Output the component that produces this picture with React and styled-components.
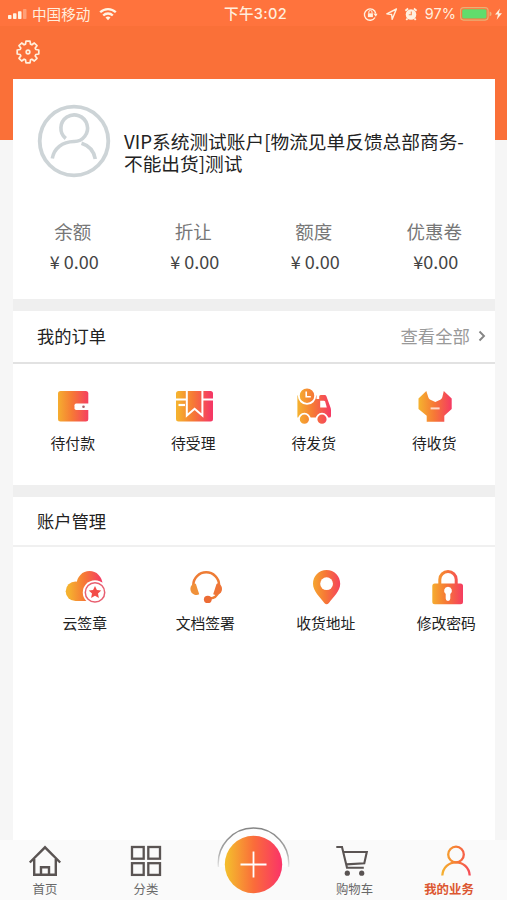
import React from 'react';
import styled, { createGlobalStyle } from 'styled-components';

const Warm = ({ id }) => (
  <defs>
    <linearGradient id={id} gradientUnits="userSpaceOnUse" x1="4" y1="0" x2="37" y2="0">
      <stop offset="0" stopColor="#f5b12f" />
      <stop offset="0.45" stopColor="#f67a35" />
      <stop offset="1" stopColor="#f53964" />
    </linearGradient>
  </defs>
);

const WalletIcon = () => (
  <Icon viewBox="0 0 40 40">
    <Warm id="wallet" />
    <rect x="5" y="4" width="30.3" height="30.5" rx="2.5" fill="url(#wallet)" />
    <path d="M37 16.5H23.2a1.7 1.7 0 0 0-1.700 1.700v3.100a1.700 1.700 0 0 0 1.700 1.700H37z" fill="#fff" />
    <circle cx="30.5" cy="19.7" r="1.3" fill="#a8606a" />
  </Icon>
);

const BoxIcon = () => (
  <Icon viewBox="0 0 40 40">
    <Warm id="box" />
    <rect x="2" y="4" width="37" height="30.5" rx="2.5" fill="url(#box)" />
    <path d="M1 12.5h39" stroke="#fff" strokeWidth="2" />
    <path d="M12.8 3v25.5l7.8-6.7 7.8 6.7V3z" fill="url(#box)" stroke="#fff" strokeWidth="2" />
    <path d="M11 2h19v2H11z" fill="#fff" />
    <path d="M4.500 18h6.500" stroke="#fff" strokeWidth="2.200" />
  </Icon>
);

const TruckIcon = () => (
  <Icon viewBox="0 0 40 40">
    <Warm id="truck" />
    <path d="M3.400 8.500H22.500v3.500h2.700V9.500q0-1.500 1.500-1.500h4q1.200 0 1.700 1.200l4 11q.6 1.300.6 3v5.800q0 1.500-1.600 1.500H3.400z" fill="url(#truck)" />
    <path d="M26.200 13.800h3.700q1 0 1.300 1l1.600 5.700h-6.600z" fill="#fff" />
    <circle cx="13" cy="8.700" r="8.200" fill="url(#truck)" stroke="#fff" strokeWidth="1.900" />
    <path d="M12.200 4.500v5.200h4.600" fill="none" stroke="#fff" strokeWidth="1.600" />
    <circle cx="10.400" cy="32.200" r="5.500" fill="url(#truck)" stroke="#fff" strokeWidth="1.800" />
    <circle cx="28" cy="32.200" r="5.500" fill="url(#truck)" stroke="#fff" strokeWidth="1.800" />
  </Icon>
);

const ReceiveIcon = () => (
  <Icon viewBox="0 0 40 40">
    <Warm id="receive" />
    <path
      d="M3.500 11.500 11.300 4l2 6.200q.4 1.400 1.600 2.200l5.400 2.600 5.400-2.600q1.200-.8 1.600-2.200l1.500-6.200 7.900 7.500v10.500L29.300 28.700v6H11.700v-6L3.500 22z"
      fill="url(#receive)"
    />
    <path d="M15.600 21.400h9" stroke="#ffd9c9" strokeWidth="2" />
  </Icon>
);

const CloudIcon = () => (
  <Icon viewBox="0 0 40 40">
    <Warm id="cloud" />
    <g fill="url(#cloud)">
      <circle cx="10.500" cy="24.200" r="9.800" />
      <circle cx="24.500" cy="17" r="12.900" />
      <path d="M10.500 20H30v14H10.500z" />
    </g>
    <circle cx="30" cy="25.400" r="12.200" fill="#fff" />
    <circle cx="30" cy="25.400" r="9.700" fill="#fff" stroke="#e85f70" strokeWidth="1.500" />
    <path
      d="m30 19 1.900 4.100 4.400.5-3.300 3 .9 4.400-3.900-2.200-3.900 2.200.9-4.400-3.300-3 4.400-.5z"
      fill="#f24d48"
    />
  </Icon>
);

const HeadsetIcon = () => (
  <Icon viewBox="0 0 40 40">
    <g fill="none" stroke="#ee7c35" strokeWidth="2.500" strokeLinecap="round">
      <path d="M7.300 19v-1a12.900 12.700 0 0 1 25.800 0v1" />
      <path d="M32.400 25q-1.800 6-8.400 6.500" />
    </g>
    <path d="M8.600 16.300Q4.400 18 4.400 22t4.200 5.700q2.600.7 4.600-.4L9.900 17z" fill="#f0913a" />
    <path d="M31.800 16.300q4.200 1.700 4.200 5.700t-4.200 5.700q-2.600.7-4.600-.4L30.500 17z" fill="#ee7437" />
    <ellipse cx="21.800" cy="32.400" rx="3.900" ry="3.600" fill="#ec6c35" />
  </Icon>
);

const PinIcon = () => (
  <Icon viewBox="0 0 40 40">
    <Warm id="pin" />
    <path
      d="M20.600 3C13 3 7 9 7 16.700c0 7.600 7 13.200 11.300 19.400q2.300 2.400 4.600 0C27.200 29.900 34.200 24.300 34.200 16.700 34.200 9 28.200 3 20.600 3z"
      fill="url(#pin)"
    />
    <circle cx="20.600" cy="16.700" r="6.400" fill="#fff" />
  </Icon>
);

const LockIcon = () => (
  <Icon viewBox="0 0 40 40">
    <Warm id="lock" />
    <path d="M12.800 18v-5.500a8.200 8 0 0 1 16.400 0V18" fill="none" stroke="url(#lock)" strokeWidth="3" />
    <rect x="5.300" y="16.500" width="30.700" height="20.800" rx="2.500" fill="url(#lock)" />
    <path d="M21 19.800a4 4 0 0 0-2.300 7.200v4.600a2.300 2.300 0 0 0 4.600 0V27a4 4 0 0 0-2.300-7.200z" fill="#fff" />
  </Icon>
);

const HomeIcon = () => (
  <TabIcon viewBox="0 0 36 36" fill="none" stroke="#5a5453" strokeWidth="2.400">
    <path d="M2.800 20.500 18 5.300 33.200 20.500" />
    <path d="M7.200 17v15.800h21.600V17" />
    <path d="M14 32.500v-7.200h8v7.200" />
  </TabIcon>
);

const CategoryIcon = () => (
  <TabIcon viewBox="0 0 36 36" fill="none" stroke="#5a5453" strokeWidth="2.300">
    <rect x="4" y="5" width="11.700" height="11.700" />
    <rect x="20.300" y="5" width="11.700" height="11.700" />
    <rect x="4" y="21.200" width="11.700" height="11.700" />
    <rect x="20.300" y="21.200" width="11.700" height="11.700" />
  </TabIcon>
);

const CartIcon = () => (
  <TabIcon viewBox="0 0 36 36" shift={-2.5} fill="none" stroke="#5a5453" strokeWidth="2.100">
    <path d="M2.300 5H8l5 20.700h16.800" />
    <path d="M9.500 10h23.300l-2.500 11.200-18 1.200" />
    <circle cx="13.300" cy="31.200" r="2.600" fill="#5a5453" stroke="none" />
    <circle cx="27.700" cy="31.200" r="2.600" fill="#5a5453" stroke="none" />
  </TabIcon>
);

const MineIcon = () => (
  <TabIcon viewBox="0 0 36 36" shift={6.5} fill="none" stroke="url(#mine)" strokeWidth="2.300">
    <Warm id="mine" />
    <circle cx="18" cy="12.500" r="7.800" />
    <path d="M4.300 33.500C4.800 25.500 11 20.300 18 20.300S31.200 25.500 31.700 33.500" />
  </TabIcon>
);

const AddIcon = () => (
  <AddDrawing viewBox="0 0 76 76">
    <defs>
      <linearGradient id="add" gradientUnits="userSpaceOnUse" x1="11" y1="0" x2="65" y2="0">
        <stop offset="0" stopColor="#f4bb2d" />
        <stop offset="0.5" stopColor="#fa6c3a" />
        <stop offset="1" stopColor="#fa3567" />
      </linearGradient>
      <linearGradient id="ring" x1="0" y1="0" x2="0" y2="1">
        <stop offset="0" stopColor="#858585" />
        <stop offset="0.6" stopColor="#a5a5a5" />
        <stop offset="1" stopColor="#e8e8e8" />
      </linearGradient>
    </defs>
    <path d="M2.500 43A35.200 35.200 0 1 1 72.500 43" fill="#fdfdfd" stroke="url(#ring)" strokeWidth="1.500" />
    <circle cx="37.500" cy="40.500" r="28.700" fill="url(#add)" />
    <path d="M37.500 27.500v26M24.500 40.500h26" stroke="#fff" strokeWidth="1.800" />
  </AddDrawing>
);

const GearIcon = () => (
  <svg width="26" height="26" viewBox="0 0 26 26" fill="none" stroke="#fff0dc" strokeWidth="1.700" strokeLinejoin="round">
    <path d="M10.500 5.200 11 2.200 15 2.200 15.500 5.200 16.900 5.800 19.300 4 22 6.700 20.200 9.100 20.800 10.500 23.800 11 23.800 15 20.800 15.500 20.200 16.900 22 19.300 19.300 22 16.900 20.200 15.500 20.800 15 23.800 11 23.800 10.500 20.800 9.100 20.200 6.700 22 4 19.300 5.800 16.900 5.200 15.500 2.200 15 2.200 11 5.200 10.500 5.800 9.100 4 6.700 6.700 4 9.100 5.800z" />
    <circle cx="13" cy="13" r="1.800" />
  </svg>
);

const SignalIcon = () => (
  <svg width="20" height="12" viewBox="0 0 20 12" fill="#fff4e4">
    <rect x="0" y="7" width="3.500" height="4" rx="0.800" />
    <rect x="5" y="5.300" width="3.500" height="5.700" rx="0.800" />
    <rect x="10" y="3.300" width="3.500" height="7.700" rx="0.800" />
    <rect x="15" y="1" width="3.500" height="10" rx="0.800" opacity="0.350" />
  </svg>
);

const WifiIcon = () => (
  <svg width="18" height="14" viewBox="0 0 18 14" fill="none" stroke="#fff4e4" strokeWidth="2.300">
    <path d="M1.200 5.300a11 11 0 0 1 15.600 0" />
    <path d="M4.200 8.500a6.800 6.800 0 0 1 9.600 0" />
    <path d="m9 13.200-2.500-2.600a3.600 3.600 0 0 1 5 0z" fill="#fff4e4" stroke="none" />
  </svg>
);

const StatusIcons = () => (
  <svg width="56" height="16" viewBox="0 0 56 16" fill="none" stroke="#fff0df" strokeWidth="1.400">
    <path d="M12 11.500A5.700 5.700 0 1 1 12.700 7.500" />
    <path d="m10.300 7.500 4.200.3-1.700 3z" fill="#fff0df" stroke="none" />
    <rect x="4.900" y="7.300" width="5" height="3.800" fill="#fff0df" stroke="none" />
    <path d="M5.800 7.300V6a1.600 1.600 0 0 1 3.200 0v1.300" strokeWidth="1" />
    <path d="m33.400 3-9.600 4.800 4.800.7.600 4.800z" strokeLinejoin="round" />
    <circle cx="48" cy="8.500" r="5.300" fill="#fff0df" stroke="none" />
    <path d="m42.400 4.800 2.700-2.300M53.600 4.800l-2.700-2.300M44.500 12.500 43.300 14M51.500 12.500l1.200 1.500" strokeWidth="1.800" />
    <path d="M48.300 5.500v3.200h-2.500" stroke="#f98950" strokeWidth="1.100" />
  </svg>
);

const BatteryIcon = () => (
  <svg width="43" height="16" viewBox="0 0 43 16">
    <rect x="0.600" y="1.600" width="27.500" height="12.500" rx="3" fill="none" stroke="#e9b075" strokeWidth="1.100" />
    <rect x="2.200" y="3.200" width="24.300" height="9.300" rx="1.500" fill="#61dc6c" />
    <path d="M29.600 5.500q2 .5 2 2.400t-2 2.400z" fill="#f0b27c" />
    <path d="m40 2.500-5 6h3l-1.300 5.300 5.300-6.500h-3.200z" fill="#fff0df" />
  </svg>
);

const AvatarIcon = () => (
  <svg width="74" height="74" viewBox="0 0 74 74" fill="none" stroke="#cdd4d7" strokeWidth="3.600">
    <circle cx="37" cy="37" r="34.300" strokeWidth="3.800" />
    <path d="M28.800 34.500A13.300 13.300 0 1 1 37 37.500C25 37.800 17 44.500 15.300 54.500" />
    <path d="M44.500 39.200C52 41.500 57 47.500 58.300 55" />
  </svg>
);

const balances = [
  { label: '余额', value: '¥ 0.00' },
  { label: '折让', value: '¥ 0.00' },
  { label: '额度', value: '¥ 0.00' },
  { label: '优惠卷', value: '¥0.00' },
];

const orders = [
  { label: '待付款', Drawing: WalletIcon },
  { label: '待受理', Drawing: BoxIcon },
  { label: '待发货', Drawing: TruckIcon },
  { label: '待收货', Drawing: ReceiveIcon },
];

const services = [
  { label: '云签章', Drawing: CloudIcon },
  { label: '文档签署', Drawing: HeadsetIcon },
  { label: '收货地址', Drawing: PinIcon },
  { label: '修改密码', Drawing: LockIcon },
];

const renderEntries = (items) => items.map(({ label, Drawing }) => (
  <Entry key={label}>
    <Drawing />
    <EntryLabel>{label}</EntryLabel>
  </Entry>
));

const App = () => (
  <Page>
    <GlobalStyle />
    <StatusBar>
      <Carrier>
        <SignalIcon />
        <CarrierName>中国移动</CarrierName>
        <WifiIcon />
      </Carrier>
      <Time>下午3:02</Time>
      <Indicators>
        <StatusIcons />
        <Percent>97%</Percent>
        <BatteryIcon />
      </Indicators>
    </StatusBar>
    <Toolbar>
      <GearIcon />
    </Toolbar>
    <Content>
      <Profile>
        <User>
          <AvatarIcon />
          <UserName>
            <NameLine>VIP系统测试账户[物流见单反馈总部商务-</NameLine>
            <NameLine>不能出货]测试</NameLine>
          </UserName>
        </User>
        <Columns>
          {balances.map(({ label, value }) => (
            <Balance key={label}>
              <BalanceLabel>{label}</BalanceLabel>
              <BalanceValue>{value}</BalanceValue>
            </Balance>
          ))}
        </Columns>
      </Profile>
      <Section height="174px">
        <SectionHeader height="53px" line="#e2e2e2">
          <SectionTitle>我的订单</SectionTitle>
          <ViewAll>
            查看全部
            <svg width="8" height="12" viewBox="0 0 8 12" fill="none" stroke="#858585" strokeWidth="1.900">
              <path d="m1.500 1.500 4.500 4.500-4.500 4.500" />
            </svg>
          </ViewAll>
        </SectionHeader>
        <Columns top="23px">{renderEntries(orders)}</Columns>
      </Section>
      <Section height="343px">
        <SectionHeader height="50px" line="#f0f0f0">
          <SectionTitle>账户管理</SectionTitle>
        </SectionHeader>
        <Columns top="20px" left="12px">{renderEntries(services)}</Columns>
      </Section>
    </Content>
    <TabBar>
      <Tab>
        <HomeIcon />
        <TabLabel>首页</TabLabel>
      </Tab>
      <Tab>
        <CategoryIcon />
        <TabLabel>分类</TabLabel>
      </Tab>
      <Tab>
        <AddIcon />
      </Tab>
      <Tab>
        <CartIcon />
        <TabLabel>购物车</TabLabel>
      </Tab>
      <Tab>
        <MineIcon />
        <TabLabel active>我的业务</TabLabel>
      </Tab>
    </TabBar>
  </Page>
);

const GlobalStyle = createGlobalStyle`
  * {
    box-sizing: border-box;
  }

  body {
    margin: 0;
    font-family: "Noto Sans CJK SC", sans-serif;
  }

  svg {
    display: block;
    flex-shrink: 0;
  }
`;

const Page = styled.div`
  display: flex;
  flex-direction: column;
  width: 507px;
  height: 900px;
  overflow: hidden;
  background: linear-gradient(#fa7038 140px, #f6f6f6 140px);
`;

const StatusBar = styled.div`
  display: grid;
  grid-template-columns: 1fr auto 1fr;
  align-items: center;
  height: 26px;
  padding: 1px 4px 0 8px;
  background-color: #ff733d;
  color: #ffeedd;
  font-size: 14.6px;
  line-height: 20px;
`;

const Carrier = styled.div`
  display: flex;
  align-items: center;
`;

const CarrierName = styled.span`
  margin: 0 9px 0 4px;
`;

const Time = styled.span`
  font-family: Inter, "Noto Sans CJK SC", sans-serif;
  font-weight: 500;
  letter-spacing: 0.3px;
`;

const Indicators = styled.div`
  display: flex;
  align-items: center;
  justify-content: flex-end;
`;

const Percent = styled.span`
  margin: 0 4px 0 6px;
  font-family: Inter, sans-serif;
  font-size: 14.5px;
`;

const Toolbar = styled.div`
  height: 53px;
  padding: 13px 15px;
`;

const Content = styled.main`
  display: flex;
  flex-direction: column;
  gap: 12px;
  width: 482px;
  margin-left: 13px;
  background-color: #efefef;
`;

const Profile = styled.section`
  height: 220px;
  background-color: #fff;
`;

const User = styled.div`
  display: flex;
  gap: 13px;
  height: 137px;
  padding: 25px 0 0 24px;
`;

const UserName = styled.h1`
  margin: 26px 0 0;
  color: #222;
  font-size: 18.7px;
  font-weight: 400;
  line-height: 22px;
  white-space: nowrap;
`;

const NameLine = styled.span`
  display: block;
`;

const Columns = styled.div`
  display: grid;
  grid-template-columns: repeat(4, 120.5px);
  padding-top: ${({ top }) => top || 0};
  padding-left: ${({ left }) => left || 0};
`;

const Balance = styled.div`
  display: flex;
  flex-direction: column;
  align-items: center;
  white-space: pre;
`;

const BalanceLabel = styled.span`
  margin-right: 1px;
  color: #777;
  font-size: 18.5px;
  line-height: 30px;
`;

const BalanceValue = styled.span`
  padding-left: 2px;
  color: #444;
  font-size: 18px;
  line-height: 31px;
`;

const Section = styled.section`
  height: ${({ height }) => height};
  background-color: #fff;
`;

const SectionHeader = styled.header`
  display: flex;
  align-items: center;
  justify-content: space-between;
  height: ${({ height }) => height};
  padding: 0 9px 2px 24px;
  border-bottom: 2px solid ${({ line }) => line};
`;

const SectionTitle = styled.h2`
  margin: 0;
  color: #222;
  font-size: 17.3px;
  font-weight: 400;
`;

const ViewAll = styled.div`
  display: flex;
  align-items: center;
  gap: 8px;
  color: #999;
  font-size: 17.4px;
`;

const Entry = styled.div`
  display: flex;
  flex-direction: column;
  align-items: center;
`;

const Icon = styled.svg`
  width: 40px;
  height: 40px;
  overflow: visible;
`;

const EntryLabel = styled.span`
  margin: 5px 1px 0 0;
  color: #222;
  font-size: 14.8px;
  line-height: 22px;
`;

const TabBar = styled.nav`
  display: grid;
  grid-template-columns: 90px 112px 103px 99px 90px;
  height: 60px;
  margin-top: auto;
  background-color: #fafafa;
`;

const Tab = styled.div`
  display: flex;
  flex-direction: column;
  align-items: center;
  padding-top: 2px;
`;

const TabIcon = styled.svg.withConfig({ shouldForwardProp: (prop) => prop !== 'shift' })`
  width: 36px;
  height: 36px;
  margin-left: ${({ shift }) => (shift ? shift * 2 : 0)}px;
`;

const AddDrawing = styled.svg`
  width: 76px;
  height: 76px;
  margin-top: -18px;
`;

const TabLabel = styled.span.withConfig({ shouldForwardProp: (prop) => prop !== 'active' })`
  margin-top: 1px;
  color: ${({ active }) => (active ? '#dc5630' : '#696969')};
  font-size: 12.4px;
  font-weight: ${({ active }) => (active ? 700 : 400)};
  line-height: 20px;
`;

export default App;
